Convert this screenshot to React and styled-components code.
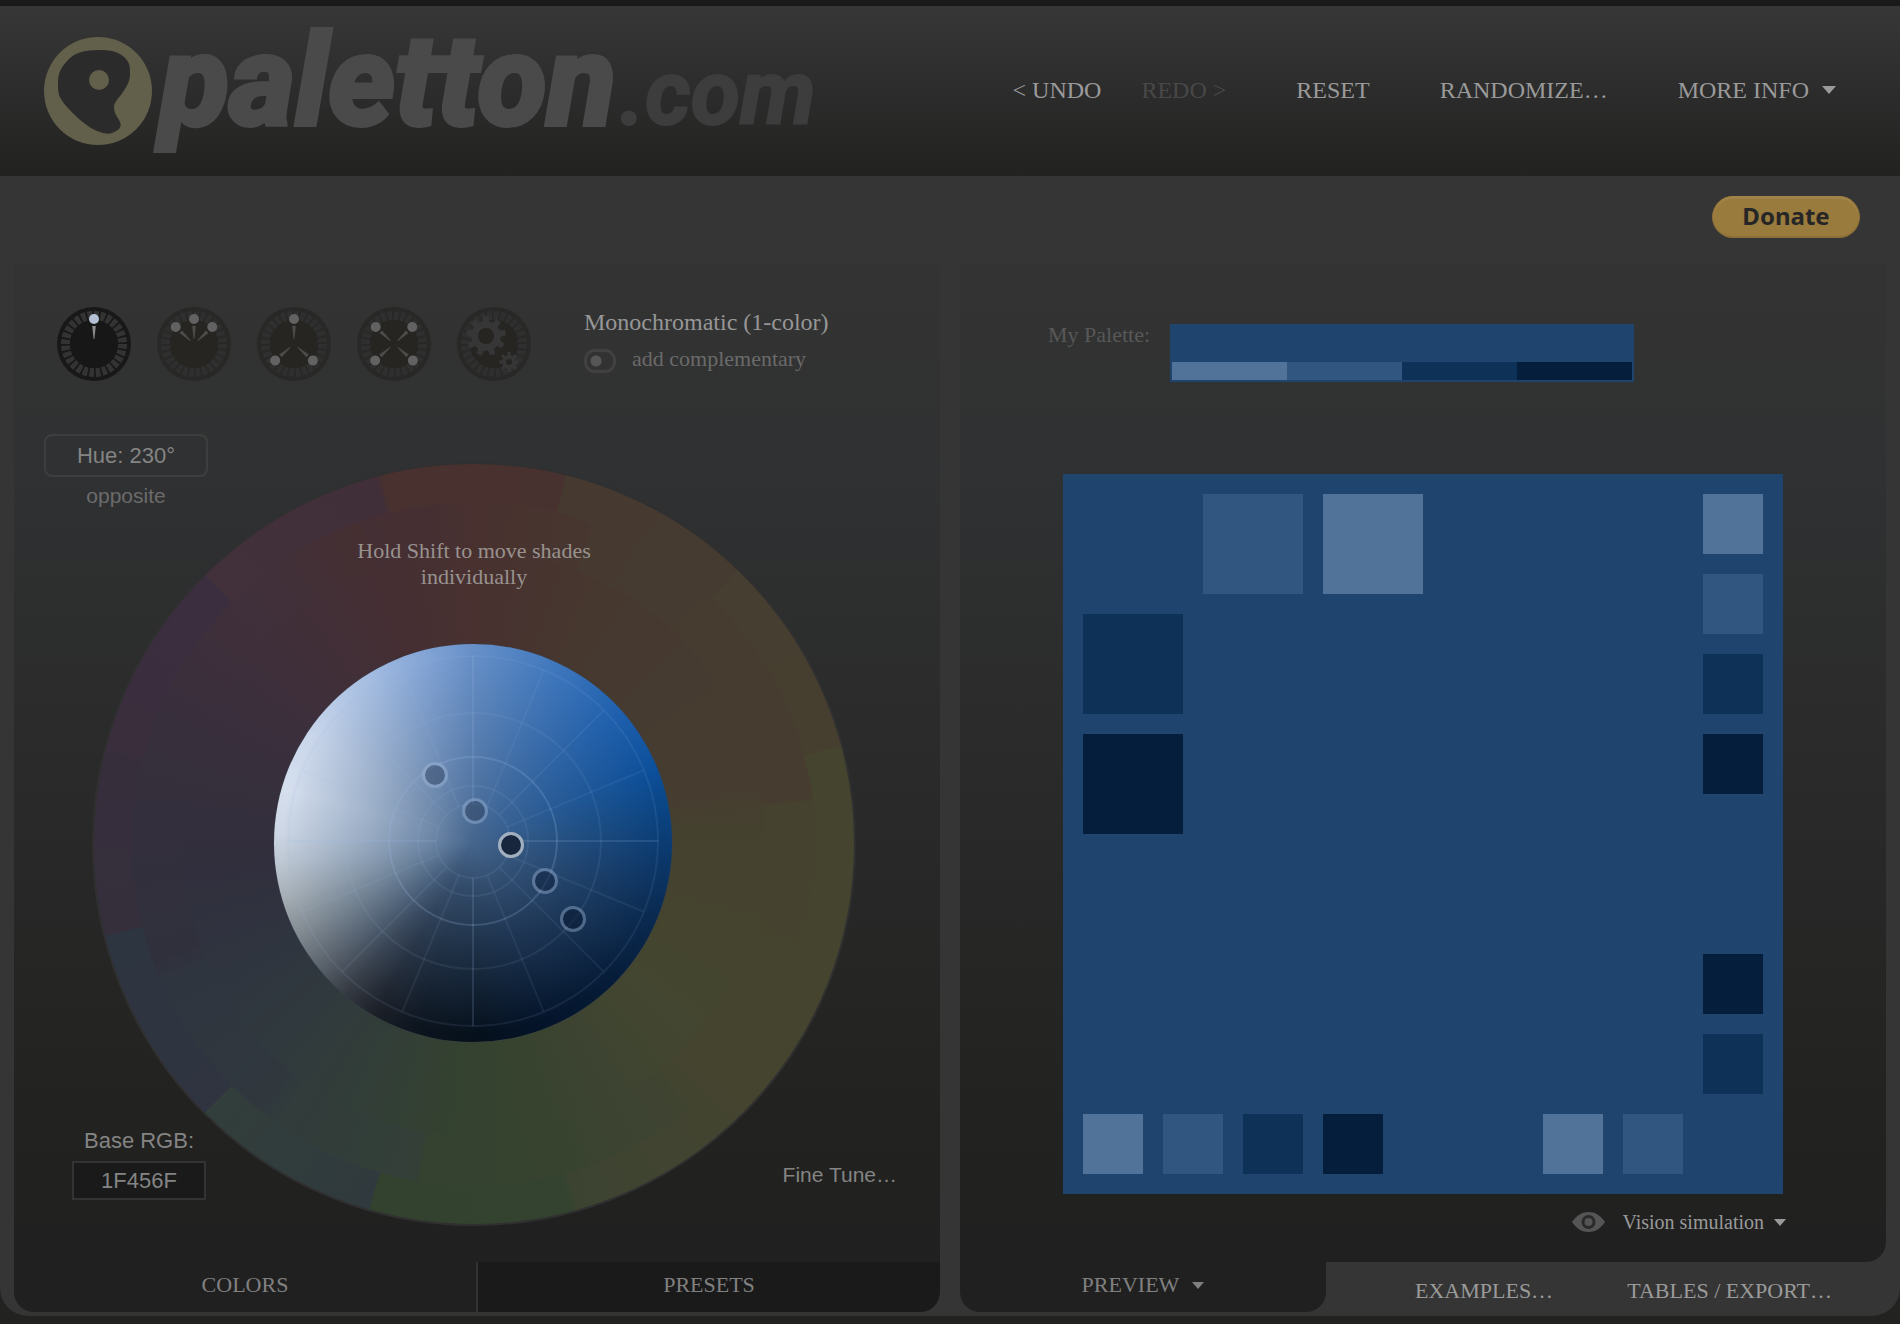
import React, { useState } from 'react';
import styled, { createGlobalStyle } from 'styled-components';

const SERIF = '"Liberation Serif", "Times New Roman", serif';
const SANS = '"Liberation Sans", Arial, sans-serif';

const shades = {
  base: '#1f456f',
  lightest: '#527399',
  light: '#315780',
  dark: '#0e3158',
  darkest: '#041e3b',
};

const GlobalStyle = createGlobalStyle`
  * { box-sizing: border-box; }
  body {
    margin: 0;
    background: #222220;
    font-family: ${SERIF};
    font-size: 22px;
    line-height: 28px;
    color: #979797;
  }
  button, input { font: inherit; color: inherit; }
`;

const Page = styled.div`
  border-top: 6px solid #1a1a1a;
`;

const Shell = styled.div`
  background: #353535;
  border-radius: 0 0 28px 28px;
  padding-bottom: 4px;
`;

const Header = styled.header`
  display: flex;
  align-items: center;
  justify-content: space-between;
  height: 170px;
  padding: 0 64px 0 40px;
  background: linear-gradient(#373737, #2c2c2c 50%, #222220);
`;

const Nav = styled.nav`
  display: flex;
  gap: 70px;
  padding-bottom: 2px;
`;

const NavGroup = styled.div`
  display: flex;
  gap: 40px;
`;

const TextButton = styled.button`
  display: inline-flex;
  align-items: center;
  gap: 13px;
  padding: 0;
  border: none;
  background: none;
  font-family: ${(props) => (props.$sans ? SANS : SERIF)};
  font-size: ${(props) => props.$size || 22}px;
  color: ${(props) => props.$color || '#9a9a9a'};
  white-space: nowrap;
  cursor: pointer;
  &:disabled {
    color: #484848;
    cursor: default;
  }
`;

const Arrow = styled.span`
  border: solid transparent;
  border-width: ${(props) => (props.$big ? '8px 7px 0' : '7px 6px 0')};
  border-top-color: currentColor;
`;

const DonateBar = styled.div`
  display: flex;
  justify-content: flex-end;
  align-items: flex-start;
  height: 88px;
  padding: 20px 40px 0;
`;

const Donate = styled.button`
  width: 148px;
  height: 42px;
  padding: 0;
  border: solid #8e7138;
  border-width: 0 1px 2px;
  border-radius: 21px;
  background: #9a7b3e;
  box-shadow: inset 0 3px 1px #a08349;
  font-family: "Noto Sans", sans-serif;
  font-size: 24px;
  font-weight: 700;
  color: #262626;
  cursor: pointer;
`;

const Columns = styled.main`
  display: grid;
  grid-template-columns: 1fr 1fr;
  gap: 20px;
  padding: 0 14px;
`;

const Panel = styled.section`
  display: flex;
  flex-direction: column;
`;

const PanelBody = styled.div`
  display: flex;
  flex-direction: column;
  flex: 1;
  background: linear-gradient(#333333, #303132 20%, #282828 60%, #222220 85%, #202020);
  border-radius: ${(props) => (props.$rounded ? '0 0 20px 0' : '0')};
`;

const SchemeRow = styled.div`
  display: flex;
  align-items: flex-start;
  gap: 52px;
  padding: 42px 0 0 42px;
`;

const SchemeList = styled.div`
  display: flex;
  gap: 24px;
`;

const SchemeButton = styled.button`
  display: block;
  width: 76px;
  height: 76px;
  padding: 0;
  border: none;
  background: none;
  cursor: pointer;
  svg { display: block; }
`;

const SchemeInfo = styled.div`
  display: flex;
  flex-direction: column;
  gap: 9px;
  padding-top: 2px;
`;

const SchemeName = styled.h2`
  margin: 0;
  font-size: 24px;
  font-weight: 400;
`;

const ToggleLabel = styled.label`
  display: flex;
  align-items: flex-end;
  gap: 16px;
  color: #6a6a6a;
`;

const Toggle = styled.input`
  appearance: none;
  width: 32px;
  height: 24px;
  margin: 0;
  border: 3px solid #414141;
  border-radius: 11px;
  background: radial-gradient(circle at 9px 9px, #565656 5px, transparent 6px);
  &:checked {
    background: radial-gradient(circle at 17px 9px, #969696 5px, transparent 6px);
  }
`;

/* every child shares the same cell, so the corner controls sit over the wheel */
const Stage = styled.div`
  display: grid;
  padding: 52px 36px 36px 30px;
  & > * { grid-area: 1 / 1; }
`;

const HueBox = styled.div`
  z-index: 1;
  align-self: start;
  justify-self: start;
  display: flex;
  flex-direction: column;
  align-items: center;
  gap: 5px;
`;

const HueButton = styled.button`
  width: 164px;
  height: 43px;
  padding: 0;
  border: 2px solid #3e3e3e;
  border-radius: 8px;
  background: none;
  font-family: ${SANS};
  color: #848484;
  cursor: pointer;
`;

const BaseBox = styled.div`
  z-index: 1;
  align-self: end;
  justify-self: start;
  display: flex;
  flex-direction: column;
  align-items: center;
  gap: 6px;
  margin: 0 0 26px 28px;
  font-family: ${SANS};
  color: #848484;
`;

const BaseInput = styled.input`
  width: 134px;
  height: 39px;
  padding: 0;
  border: 2px solid #333333;
  border-radius: 0;
  background: #1a1a1a;
  text-align: center;
`;

const FineTune = styled(TextButton)`
  z-index: 1;
  align-self: end;
  justify-self: end;
  margin: 0 7px 37px 0;
`;

const Wheel = styled.div`
  justify-self: center;
  display: grid;
  place-items: center;
  width: 764px;
  height: 764px;
  margin-top: 28px;
  border: 2px solid #303031;
  border-radius: 50%;
  background: conic-gradient(
    #48312f 0deg, #48322f 14deg, #463a30 14deg, #463b30 44deg, #463e30 44deg, #463e2f 75deg,
    #45452f 75deg, #45442f 134deg, #444430 135deg, #3c4431 164deg, #34432f 165deg, #33422f 196deg,
    #303a3e 196deg, #323e3b 225deg, #2f3440 225deg, #2d3540 256deg, #352f3c 256deg, #372e3c 284deg,
    #3a2e3d 285deg, #3b2e3f 315deg, #42303a 315deg, #402e39 345deg, #48312f 346deg, #48312f 360deg
  );
  & > * { grid-area: 1 / 1; }
`;

const WheelBand = styled.div`
  width: ${(props) => props.$size}px;
  height: ${(props) => props.$size}px;
  border-radius: 50%;
  background: conic-gradient(${(props) => props.$stops});
`;

const Hint = styled.p`
  z-index: 1;
  align-self: start;
  width: 250px;
  margin: 74px 0 0;
  text-align: center;
  line-height: 26px;
  color: #98928f;
`;

const Disc = styled.div`
  position: relative;
  width: 398px;
  height: 398px;
  margin: 0 2px 2px 0;
  border-radius: 50%;
  background:
    radial-gradient(circle at 50% 50%, #45658c, #45658cb0 16%, #45658c60 38%, #45658c00 68%),
    conic-gradient(
      #6790c8 0deg, #3f77bd 25deg, #1f60ae 48deg, #0c4f9a 68deg, #0a4380 82deg, #0b376a 95deg,
      #0a2a50 112deg, #061c38 135deg, #04142a 158deg, #05101c 178deg, #0c141e 196deg,
      #1c2028 210deg, #353a42 220deg, #5a626b 231deg, #838c93 243deg, #a5aeb5 254deg,
      #bdc7d3 264deg, #ccd6e4 273deg, #d5dfee 286deg, #c8d5ea 304deg, #a9c0e2 325deg,
      #84a5d6 345deg, #6790c8 360deg
    );
  box-shadow: 0 0 2px #3c4250;
  svg { display: block; }
`;

const Handle = styled.button`
  position: absolute;
  left: ${(props) => props.$x - 13}px;
  top: ${(props) => props.$y - 13}px;
  width: 26px;
  height: 26px;
  padding: 0;
  border: ${(props) => (props.$active ? '3px solid #a3afbf' : '3px solid rgba(165, 188, 220, 0.4)')};
  border-radius: 50%;
  background: ${(props) => props.$fill};
  background-clip: padding-box;
  cursor: pointer;
`;

const TabRow = styled.div`
  display: flex;
  height: 50px;
`;

const Tab = styled.button`
  flex: 1;
  display: flex;
  align-items: center;
  justify-content: center;
  gap: 13px;
  padding: 0 0 4px;
  border: none;
  border-left: ${(props) => (props.$divided ? '2px solid #333333' : 'none')};
  border-radius: ${(props) => props.$radius};
  background: ${(props) => (props.$active ? '#202020' : '#1a1a1a')};
  color: #808080;
  cursor: pointer;
`;

const PreviewTab = styled(Tab)`
  flex: 0 0 366px;
`;

const LinkTabs = styled.div`
  flex: 1;
  display: flex;
  justify-content: space-between;
  padding: 8px 54px 0 89px;
`;

const PaletteRow = styled.div`
  display: flex;
  align-items: flex-start;
  gap: 20px;
  padding: 60px 0 0 88px;
`;

const PaletteLabel = styled.span`
  padding-top: 3px;
  line-height: 16px;
  color: #585858;
`;

const PaletteBar = styled.div`
  display: flex;
  width: 464px;
  padding: 38px 2px 2px;
  background: ${shades.base};
`;

const PaletteShade = styled.div`
  flex: 1;
  height: 18px;
  background: ${(props) => shades[props.$shade]};
`;

const Preview = styled.div`
  align-self: center;
  display: grid;
  grid-template-columns: repeat(36, 20px);
  grid-template-rows: repeat(36, 20px);
  margin-top: 92px;
  background: ${shades.base};
`;

const Swatch = styled.div`
  grid-column: ${(props) => props.$col} / span ${(props) => props.$span};
  grid-row: ${(props) => props.$row} / span ${(props) => props.$span};
  background: ${(props) => shades[props.$shade]};
`;

const VisionRow = styled.div`
  display: flex;
  justify-content: flex-end;
  align-items: center;
  gap: 17px;
  padding: 14px 100px 26px 0;
`;

const VisionButton = styled(TextButton)`
  gap: 10px;
`;

// large swatches span 5 cells, small ones 3
const swatches = [
  [8, 2, 5, 'light'], [14, 2, 5, 'lightest'], [2, 8, 5, 'dark'], [2, 14, 5, 'darkest'],
  [33, 2, 3, 'lightest'], [33, 6, 3, 'light'], [33, 10, 3, 'dark'], [33, 14, 3, 'darkest'],
  [33, 25, 3, 'darkest'], [33, 29, 3, 'dark'],
  [2, 33, 3, 'lightest'], [6, 33, 3, 'light'], [10, 33, 3, 'dark'], [14, 33, 3, 'darkest'],
  [25, 33, 3, 'lightest'], [29, 33, 3, 'light'],
];

const schemes = [
  { name: 'Monochromatic', pins: [0] },
  { name: 'Adjacent colors', pins: [-47, 0, 47] },
  { name: 'Triad', pins: [0, 131, -131] },
  { name: 'Tetrad', pins: [-47, 47, 131, -131] },
  { name: 'Freestyle', pins: [], gears: true },
];

const handles = [
  { x: 161, y: 131, fill: 'rgba(52, 72, 104, 0.55)' },
  { x: 201, y: 167, fill: 'rgba(48, 66, 96, 0.5)' },
  { x: 237, y: 201, fill: '#17263d', active: true },
  { x: 271, y: 237, fill: 'rgba(12, 30, 58, 0.5)' },
  { x: 299, y: 275, fill: 'rgba(6, 22, 46, 0.5)' },
];

const midStops = `#48312f 0deg, #48332f 8deg, #473630 20deg, #463a30 21deg, #463c30 50deg,
  #463d30 51deg, #463c2f 82deg, #45432f 83deg, #45442f 130deg, #434430 140deg, #3f4431 141deg,
  #3b4431 158deg, #37432f 163deg, #34422f 189deg, #333f37 190deg, #313c3b 215deg,
  #30383e 219deg, #2f353f 246deg, #30303d 250deg, #342f3c 276deg, #382f3c 292deg,
  #3d2f3b 306deg, #41303a 322deg, #452f31 340deg, #442f34 341deg, #462f32 352deg, #48312f 360deg`;

const innerStops = `#48312f 0deg, #47342f 16deg, #46382f 28deg, #463b30 50deg, #463d30 78deg,
  #45412f 86deg, #45452f 115deg, #424630 136deg, #3d4431 150deg, #37432f 168deg, #34422f 182deg,
  #323e38 204deg, #30393e 226deg, #2f343f 246deg, #312f3d 264deg, #362f3c 284deg,
  #3c2f3c 304deg, #422f37 326deg, #462f32 345deg, #48312f 360deg`;

function gearPath(cx, cy, inner, outer, teeth) {
  const points = [];
  const step = (Math.PI * 2) / teeth;
  for (let i = 0; i < teeth; i++) {
    [[-0.3, inner], [-0.2, outer], [0.2, outer], [0.3, inner]].forEach(([shift, r]) => {
      const a = step * (i + shift);
      points.push(`${cx + r * Math.sin(a)},${cy - r * Math.cos(a)}`);
    });
  }
  return `M${points.join('L')}Z`;
}

function SchemeIcon({ pins, gears, active }) {
  const rim = active ? '#181818' : '#282827';
  const face = active ? '#171717' : '#262522';
  const tick = active ? '#333333' : '#2f2f2f';
  return (
    <svg width="76" height="76" viewBox="-38 -38 76 76" aria-hidden="true">
      <circle r="37" fill={rim} />
      <circle r="28.500" fill="none" stroke={tick} strokeWidth="9" pathLength="28" strokeDasharray="0.72 0.28" />
      <circle r="24" fill={face} />
      {pins.map((angle) => (
        <g key={angle} transform={`rotate(${angle})`}>
          <path d="M-1.800-18H1.800L.4-5H-.4Z" fill={active ? '#8a8a8a' : '#4c4c4b'} />
          <circle cy="-25" r="5" fill={active ? '#b4c0d4' : '#626262'} />
        </g>
      ))}
      {gears && (
        <g fill="#363636">
          <path d={gearPath(-8, -8, 15, 20, 9)} />
          <circle cx="-8" cy="-8" r="8" fill={face} />
          <path d={gearPath(15, 18, 7, 10, 8)} />
          <circle cx="15" cy="18" r="3" fill={face} />
        </g>
      )}
    </svg>
  );
}

const LogoSvg = styled.svg`
  overflow: visible;
  font-family: Roboto, sans-serif;
  font-style: italic;
`;

function Logo() {
  return (
    <LogoSvg width="790" height="134" viewBox="40 24 790 134" role="img" aria-label="paletton.com">
      <circle cx="98" cy="91" r="54" fill="#625f4a" />
      <path
        d="M99 50C84 50 75 53 69 59C61 67 58 73 58 83C58 90 58 94 61 99C65 106 72 112 79 119C87 126 95 131 103 133C108 134 111 134 114 132C119 130 122 127 120 122C118 117 114 114 114 107C114 102 119 98 123 92C127 86 130 81 130 74C130 67 130 64 126 59C119 51 110 50 99 50Z"
        fill="#2b2b2b"
      />
      <circle cx="99" cy="80" r="10" fill="#625f4a" />
      <text x="160" y="125" fontSize="127" fontWeight="800" fill="#4a4a4a" stroke="#4a4a4a" strokeWidth="4">
        paletton
      </text>
      <text x="620" y="124" fontSize="90" fontWeight="700" fill="#3d3d3d" stroke="#3d3d3d" strokeWidth="2">
        .com
      </text>
    </LogoSvg>
  );
}

function DiscGrid() {
  const spokes = Array.from({ length: 16 }, (_, i) => i * 22.5);
  return (
    <svg width="398" height="398" viewBox="0 0 398 398" aria-hidden="true">
      <g transform="translate(199 197)" fill="none" stroke="#9db9e4">
        {[37, 55, 84, 128, 185].map((r) => (
          <circle key={r} r={r} strokeWidth="2" strokeOpacity={r === 84 ? 0.22 : 0.1} />
        ))}
        {spokes.map((angle) => (
          <path
            key={angle}
            d="M0-37V-185"
            transform={`rotate(${angle})`}
            strokeWidth="2"
            strokeOpacity={angle % 90 === 0 ? 0.16 : 0.09}
          />
        ))}
      </g>
    </svg>
  );
}

function EyeIcon() {
  return (
    <svg width="33" height="20" viewBox="0 0 33 20" aria-hidden="true">
      <path d="M0 10C5 3 10 0 16.500 0S28 3 33 10C28 17 23 20 16.500 20S5 17 0 10Z" fill="#555555" />
      <circle cx="16.500" cy="10" r="7" fill="#2a2a29" />
      <circle cx="16.500" cy="10" r="4" fill="#555555" />
    </svg>
  );
}

export default function App() {
  const [scheme, setScheme] = useState(0);
  const [complementary, setComplementary] = useState(false);
  const [baseRgb, setBaseRgb] = useState('1F456F');

  return (
    <Page>
      <GlobalStyle />
      <Shell>
        <Header>
          <Logo />
          <Nav>
            <NavGroup>
              <TextButton $size={24}>&lt; UNDO</TextButton>
              <TextButton $size={24} disabled>REDO &gt;</TextButton>
            </NavGroup>
            <TextButton $size={24}>RESET</TextButton>
            <TextButton $size={24}>RANDOMIZE…</TextButton>
            <TextButton $size={24}>MORE INFO <Arrow $big /></TextButton>
          </Nav>
        </Header>
        <DonateBar>
          <Donate>Donate</Donate>
        </DonateBar>
        <Columns>
          <Panel>
            <PanelBody>
              <SchemeRow>
                <SchemeList>
                  {schemes.map((item, i) => (
                    <SchemeButton key={item.name} aria-label={item.name} onClick={() => setScheme(i)}>
                      <SchemeIcon pins={item.pins} gears={item.gears} active={i === scheme} />
                    </SchemeButton>
                  ))}
                </SchemeList>
                <SchemeInfo>
                  <SchemeName>Monochromatic (1-color)</SchemeName>
                  <ToggleLabel>
                    <Toggle
                      type="checkbox"
                      checked={complementary}
                      onChange={(event) => setComplementary(event.target.checked)}
                    />
                    add complementary
                  </ToggleLabel>
                </SchemeInfo>
              </SchemeRow>
              <Stage>
                <HueBox>
                  <HueButton>Hue: 230°</HueButton>
                  <TextButton $sans $size={21} $color="#6b6b6b">opposite</TextButton>
                </HueBox>
                <Wheel>
                  <WheelBand $size={684} $stops={midStops} />
                  <WheelBand $size={584} $stops={innerStops} />
                  <Hint>Hold Shift to move shades individually</Hint>
                  <Disc>
                    <DiscGrid />
                    {handles.map((h, i) => (
                      <Handle key={i} aria-label={`Shade ${i + 1}`} $x={h.x} $y={h.y} $fill={h.fill} $active={h.active} />
                    ))}
                  </Disc>
                </Wheel>
                <BaseBox>
                  <label htmlFor="base-rgb">Base RGB:</label>
                  <BaseInput id="base-rgb" value={baseRgb} onChange={(event) => setBaseRgb(event.target.value)} />
                </BaseBox>
                <FineTune $sans $size={21} $color="#848484">Fine Tune…</FineTune>
              </Stage>
            </PanelBody>
            <TabRow>
              <Tab $active $radius="0 0 0 20px">COLORS</Tab>
              <Tab $divided $radius="0 0 20px 0">PRESETS</Tab>
            </TabRow>
          </Panel>
          <Panel>
            <PanelBody $rounded>
              <PaletteRow>
                <PaletteLabel>My Palette:</PaletteLabel>
                <PaletteBar>
                  {['lightest', 'light', 'dark', 'darkest'].map((shade) => (
                    <PaletteShade key={shade} $shade={shade} />
                  ))}
                </PaletteBar>
              </PaletteRow>
              <Preview>
                {swatches.map(([col, row, span, shade]) => (
                  <Swatch key={`${col}-${row}`} $col={col} $row={row} $span={span} $shade={shade} />
                ))}
              </Preview>
              <VisionRow>
                <EyeIcon />
                <VisionButton $size={20}>Vision simulation <Arrow /></VisionButton>
              </VisionRow>
            </PanelBody>
            <TabRow>
              <PreviewTab $active $radius="0 0 20px 20px">PREVIEW <Arrow /></PreviewTab>
              <LinkTabs>
                <TextButton>EXAMPLES…</TextButton>
                <TextButton>TABLES / EXPORT…</TextButton>
              </LinkTabs>
            </TabRow>
          </Panel>
        </Columns>
      </Shell>
    </Page>
  );
}
